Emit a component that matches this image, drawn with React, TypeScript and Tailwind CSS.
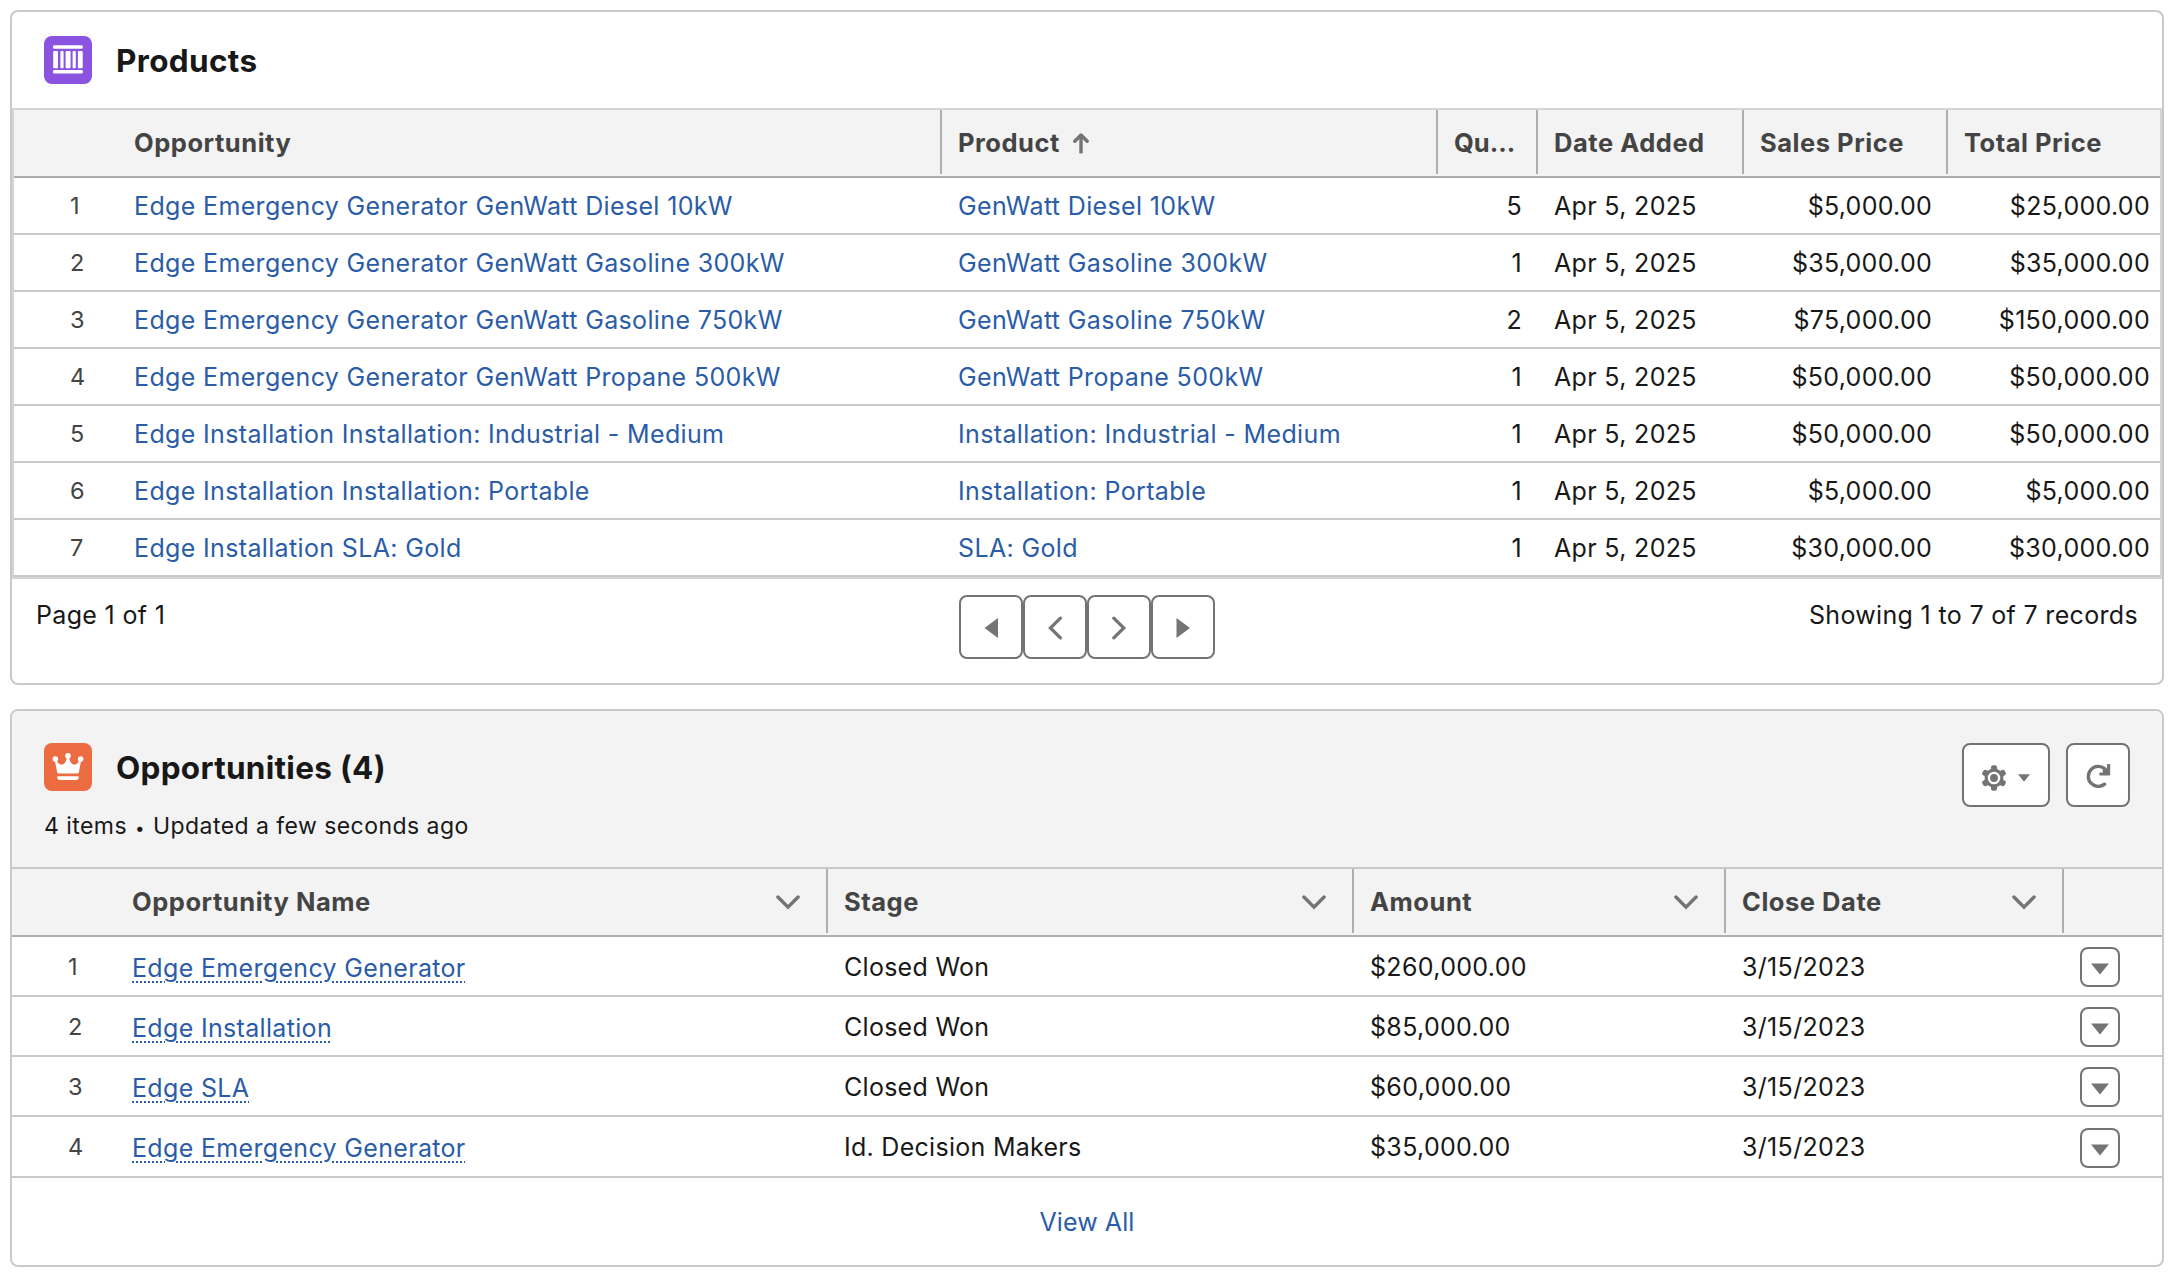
import type { ReactNode } from 'react';

const products = [
  ['Edge Emergency Generator GenWatt Diesel 10kW', 'GenWatt Diesel 10kW', '5', 'Apr 5, 2025', '$5,000.00', '$25,000.00'],
  ['Edge Emergency Generator GenWatt Gasoline 300kW', 'GenWatt Gasoline 300kW', '1', 'Apr 5, 2025', '$35,000.00', '$35,000.00'],
  ['Edge Emergency Generator GenWatt Gasoline 750kW', 'GenWatt Gasoline 750kW', '2', 'Apr 5, 2025', '$75,000.00', '$150,000.00'],
  ['Edge Emergency Generator GenWatt Propane 500kW', 'GenWatt Propane 500kW', '1', 'Apr 5, 2025', '$50,000.00', '$50,000.00'],
  ['Edge Installation Installation: Industrial - Medium', 'Installation: Industrial - Medium', '1', 'Apr 5, 2025', '$50,000.00', '$50,000.00'],
  ['Edge Installation Installation: Portable', 'Installation: Portable', '1', 'Apr 5, 2025', '$5,000.00', '$5,000.00'],
  ['Edge Installation SLA: Gold', 'SLA: Gold', '1', 'Apr 5, 2025', '$30,000.00', '$30,000.00'],
];

const opportunities = [
  ['Edge Emergency Generator', 'Closed Won', '$260,000.00', '3/15/2023'],
  ['Edge Installation', 'Closed Won', '$85,000.00', '3/15/2023'],
  ['Edge SLA', 'Closed Won', '$60,000.00', '3/15/2023'],
  ['Edge Emergency Generator', 'Id. Decision Makers', '$35,000.00', '3/15/2023'],
];

const productGrid = 'grid grid-cols-[104px_824px_496px_100px_206px_204px_212px]';
const opportunityGrid = 'grid grid-cols-[104px_712px_526px_372px_338px_98px]';

function ProductIcon() {
  return (
    <svg viewBox="0 0 48 48" className="size-12 shrink-0">
      <rect width="48" height="48" rx="8" fill="#8a54e0" />
      <g fill="#fff">
        <rect x="9" y="9.2" width="29.8" height="3.6" rx="1.3" />
        <rect x="9" y="33.9" width="29.8" height="3.6" rx="1.3" />
        <rect x="9.2" y="15" width="4.8" height="17.2" rx="1" />
        <rect x="16.4" y="15" width="3.2" height="17.2" rx="1" />
        <rect x="21.6" y="15" width="5" height="17.2" rx="1" />
        <rect x="28.6" y="15" width="3.2" height="17.2" rx="1" />
        <rect x="33.9" y="15" width="4.8" height="17.2" rx="1" />
      </g>
    </svg>
  );
}

function CrownIcon() {
  return (
    <svg viewBox="0 0 48 48" className="size-12 shrink-0">
      <rect width="48" height="48" rx="8" fill="#ed6b40" />
      <g fill="#fff">
        <circle cx="11.4" cy="16.1" r="2.8" />
        <circle cx="24" cy="12.8" r="2.8" />
        <circle cx="36.6" cy="16.1" r="2.8" />
        <path d="M10.9 17.6L12.6 17.3C14 20 15.4 21.6 17.2 21.6C20.4 21.6 22.4 18.6 22.8 14.5H25.2C25.6 18.6 27.6 21.6 30.8 21.6C32.6 21.6 34 20 35.4 17.3L37.1 17.6L34.9 29.2C34.7 30 34.3 30.4 33.5 30.4H14.5C13.7 30.4 13.3 30 13.1 29.2Z" />
        <path d="M14 33.2H34C34.5 33.2 34.8 33.5 34.8 34C34.8 35.8 33.8 37 32.2 37H15.8C14.2 37 13.2 35.8 13.2 34C13.2 33.5 13.5 33.2 14 33.2Z" />
      </g>
    </svg>
  );
}

function ChevronDown() {
  return (
    <svg viewBox="0 0 24 15" className="mt-px h-[15px] w-6" fill="none" stroke="#747474" strokeWidth="3.4" strokeLinecap="round">
      <path d="M1.9 2L12 12.2L22.1 2" />
    </svg>
  );
}

function GearIcon() {
  return (
    <svg viewBox="0 0 24 26" className="h-[26px] w-6" fill="#747474">
      {[0, 60, 120].map((angle) => (
        <rect key={angle} x="9" y="0.2" width="6" height="25.6" rx="2" transform={`rotate(${angle} 12 13)`} />
      ))}
      <path d="M12 3.4L20.3 8.2V17.8L12 22.6L3.7 17.8V8.2Z" stroke="#747474" strokeWidth="2" strokeLinejoin="round" />
      <circle cx="12" cy="13" r="5.1" fill="#747474" stroke="#fff" strokeWidth="2.4" />
    </svg>
  );
}

function RefreshIcon() {
  return (
    <svg viewBox="0 0 25 25" className="size-[25px]" fill="none" stroke="#747474" strokeWidth="3.4">
      <path d="M18.6 21.2A10 10 0 1 1 18.6 5.6L20.5 7.4" strokeLinecap="round" />
      <path d="M21 1.6C21 .8 24.2 .8 24.2 1.6V11.6C24.2 12.4 23.9 12.6 23.2 12.6H14C13 12.6 13 9.6 14 9.6H17.2L16.4 7.6L18.5 5.4L21 7Z" fill="#747474" stroke="none" />
    </svg>
  );
}

function IconButton({ className, children }: { className: string; children: ReactNode }) {
  return (
    <button className={`flex items-center justify-center rounded-lg border-2 border-[#747474] bg-white ${className}`}>
      {children}
    </button>
  );
}

function HeaderCell({ children, last, menu }: { children?: ReactNode; last?: boolean; menu?: boolean }) {
  return (
    <div className={`flex h-16 items-center pt-0.5 pl-4 ${last ? '' : 'border-r-2 border-[#aeaeae]'} ${menu ? 'justify-between pr-[26px]' : ''}`}>
      {children}
      {menu && <ChevronDown />}
    </div>
  );
}

function ProductsCard() {
  return (
    <section className="flex h-[675px] flex-col rounded-lg border-2 border-[#c9c9c9] bg-white">
      <header className="flex h-24 items-center gap-6 pl-8">
        <ProductIcon />
        <h2 className="pt-0.5 text-[31.5px] font-bold tracking-[0.33px] text-[#181818]">Products</h2>
      </header>
      <div className="border-2 border-[#d4d4d4]">
        <div className={`${productGrid} h-[68px] border-b-2 border-[#aeaeae] bg-[#f3f3f3] text-[25.5px] font-bold tracking-[0.53px] text-[#444444]`}>
          <div />
          <HeaderCell>Opportunity</HeaderCell>
          <HeaderCell>
            Product
            <svg viewBox="0 0 16 22" className="ml-[13px] h-[22px] w-4" fill="none" stroke="#747474" strokeWidth="3.4" strokeLinecap="round">
              <path d="M1.8 9.2L8 3L14.2 9.2" strokeLinejoin="round" />
              <path d="M8 3V21.4" strokeLinecap="butt" />
            </svg>
          </HeaderCell>
          <HeaderCell><span className="tracking-[0px]">Qu...</span></HeaderCell>
          <HeaderCell>Date Added</HeaderCell>
          <HeaderCell>Sales Price</HeaderCell>
          <HeaderCell last>Total Price</HeaderCell>
        </div>
        {products.map(([opportunity, product, quantity, date, sales, total], i) => (
          <div key={opportunity} className={`${productGrid} h-[57px] items-center border-b-2 border-[#c9c9c9]`}>
            <span className="pl-14 text-[23.5px] text-[#444444]">{i + 1}</span>
            <a className="pl-4 tracking-[0.35px] text-[#2a5ca8]">{opportunity}</a>
            <a className="pl-4 tracking-[0.36px] text-[#2a5ca8]">{product}</a>
            <span className="pr-4 text-right">{quantity}</span>
            <span className="pl-4">{date}</span>
            <span className="pr-4 text-right tracking-[0.27px]">{sales}</span>
            <span className="pr-2.5 text-right tracking-[0.3px]">{total}</span>
          </div>
        ))}
      </div>
      <footer className="grid grid-cols-3 pt-4 pr-6 pl-6">
        <span className="self-start">Page 1 of 1</span>
        <div className="flex justify-center">
          <IconButton className="size-16 pt-0.5">
            <svg viewBox="0 0 14 20" className="h-5 w-3.5" fill="#747474"><path d="M14 0V20L0.5 10Z" /></svg>
          </IconButton>
          <IconButton className="size-16 pt-0.5">
            <svg viewBox="0 0 16 24" className="h-6 w-4" fill="none" stroke="#747474" strokeWidth="3.2" strokeLinecap="round"><path d="M13.4 2.2L3.4 12L13.4 21.8" /></svg>
          </IconButton>
          <IconButton className="size-16 pt-0.5">
            <svg viewBox="0 0 16 24" className="h-6 w-4" fill="none" stroke="#747474" strokeWidth="3.2" strokeLinecap="round"><path d="M2.8 2.2L12.8 12L2.8 21.8" /></svg>
          </IconButton>
          <IconButton className="size-16 pt-0.5">
            <svg viewBox="0 0 14 20" className="h-5 w-3.5" fill="#747474"><path d="M0.5 0V20L14 10Z" /></svg>
          </IconButton>
        </div>
        <span className="self-start text-right">Showing 1 to 7 of 7 records</span>
      </footer>
    </section>
  );
}

function OpportunitiesCard() {
  return (
    <section className="flex h-[558px] flex-col overflow-hidden rounded-lg border-2 border-[#c9c9c9] bg-white">
      <header className="flex h-[158px] justify-between border-b-2 border-[#c9c9c9] bg-[#f3f3f3] pt-8 pr-8 pl-8">
        <div>
          <div className="flex h-12 items-center gap-6">
            <CrownIcon />
            <h2 className="pt-px text-[31.5px] font-bold tracking-[0.28px] text-[#181818]">Opportunities (4)</h2>
          </div>
          <p className="mt-[15px] text-[23px] tracking-[0.45px]">
            4 items <span className="mx-px text-[17px]">•</span> Updated a few seconds ago
          </p>
        </div>
        <div className="flex gap-4">
          <IconButton className="h-16 w-[88px] gap-3 pt-1.5">
            <GearIcon />
            <svg viewBox="0 0 12 8" className="h-2 w-3" fill="#747474"><path d="M0 0.3H12L6 7.8Z" /></svg>
          </IconButton>
          <IconButton className="size-16">
            <RefreshIcon />
          </IconButton>
        </div>
      </header>
      <div className={`${opportunityGrid} h-[68px] border-b-2 border-[#aeaeae] bg-[#f3f3f3] text-[25.5px] font-bold tracking-[0.53px] text-[#444444]`}>
        <div />
        <HeaderCell menu>Opportunity Name</HeaderCell>
        <HeaderCell menu>Stage</HeaderCell>
        <HeaderCell menu>Amount</HeaderCell>
        <HeaderCell menu>Close Date</HeaderCell>
        <div />
      </div>
      {opportunities.map(([name, stage, amount, date], i) => (
        <div key={i} className={`${opportunityGrid} h-[60px] items-center border-b-2 border-[#c9c9c9] pt-0.5 last-of-type:h-[61px] last-of-type:[&>span]:-mt-px`}>
          <span className="pl-14 text-[23.5px] text-[#444444]">{i + 1}</span>
          <span className="pt-0.5 pl-4">
            <a className="text-[#2a5ca8] underline decoration-dotted decoration-2 underline-offset-[4px]">{name}</a>
          </span>
          <span className="pl-4 tracking-[0.28px]">{stage}</span>
          <span className="pl-4">{amount}</span>
          <span className="pl-4">{date}</span>
          <IconButton className="ml-4 size-10">
            <svg viewBox="0 0 18 12" className="mt-1 h-3 w-[18px]" fill="#747474"><path d="M0 0.4H18L9 11.6Z" /></svg>
          </IconButton>
        </div>
      ))}
      <footer className="flex flex-1 items-center justify-center">
        <a className="tracking-[0.1px] text-[#2a5ca8]">View All</a>
      </footer>
    </section>
  );
}

export default function App() {
  return (
    <main className="flex h-[1280px] w-[2176px] flex-col gap-6 bg-white pt-2.5 pr-3 pl-2.5 font-['Inter',sans-serif] text-[25px] leading-[40px] tracking-[0.33px] text-[#181818]">
      <ProductsCard />
      <OpportunitiesCard />
    </main>
  );
}
